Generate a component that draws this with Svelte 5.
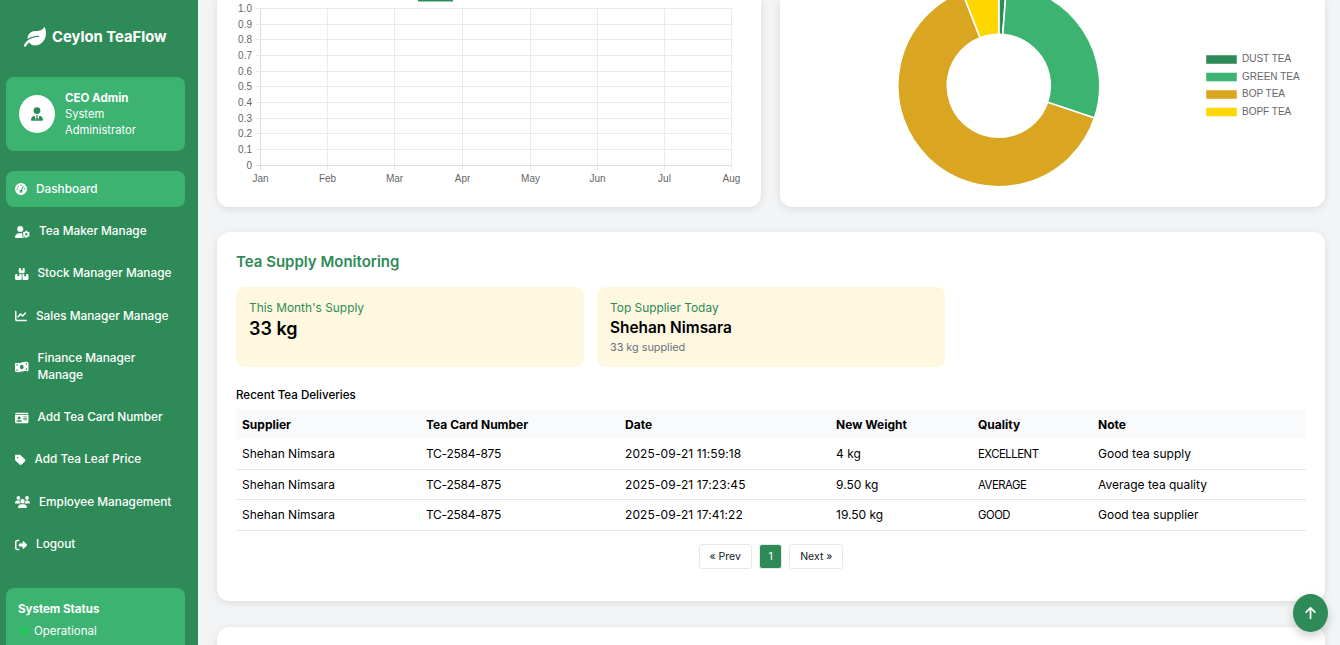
<script>
  const I = {
    gauge: [512, "M0 256a256 256 0 1 1 512 0A256 256 0 1 1 0 256zM288 96a32 32 0 1 0 -64 0 32 32 0 1 0 64 0zM256 416c35.3 0 64-28.7 64-64c0-17.4-6.9-33.1-18.1-44.6L366 161.7c5.3-12.1-.2-26.3-12.3-31.6s-26.3 .2-31.6 12.3L257.9 288c-.6 0-1.3 0-1.9 0c-35.3 0-64 28.7-64 64s28.7 64 64 64zM176 144a32 32 0 1 0 -64 0 32 32 0 1 0 64 0zM96 288a32 32 0 1 0 0-64 32 32 0 1 0 0 64zm352-32a32 32 0 1 0 -64 0 32 32 0 1 0 64 0z"],
    gear: [640, "M224 0a128 128 0 1 1 0 256A128 128 0 1 1 224 0zM178.3 304h91.4c11.8 0 23.4 1.2 34.5 3.3c-2.1 18.5 7.4 35.6 21.8 44.8c-16.6 10.6-26.7 31.6-20 53.3c4 12.9 9.4 25.5 16.4 37.6s15.2 23.1 24.4 33c15.7 16.9 39.6 18.4 57.2 8.7v.9c0 9.2 2.7 18.5 7.9 26.3H29.7C13.3 512 0 498.7 0 482.3C0 383.8 79.8 304 178.3 304zM436 218.2c0-7 4.5-13.3 11.3-14.8c10.5-2.4 21.5-3.7 32.7-3.7s22.2 1.3 32.7 3.7c6.8 1.5 11.3 7.8 11.3 14.8v30.6c7.9 3.4 15.4 7.7 22.3 12.8l24.9-14.3c6.1-3.5 13.7-2.7 18.5 2.4c7.6 8.1 14.3 17.2 20.1 27.2s10.3 20.4 13.5 31c2.1 6.7-1.1 13.7-7.2 17.2l-25 14.4c.4 4 .7 8.1 .7 12.3s-.2 8.2-.7 12.3l25 14.4c6.1 3.5 9.2 10.5 7.2 17.2c-3.3 10.6-7.8 21-13.5 31s-12.5 19.1-20.1 27.2c-4.8 5.1-12.5 5.9-18.5 2.4l-24.9-14.3c-6.9 5.1-14.3 9.4-22.3 12.8l0 30.6c0 7-4.5 13.3-11.3 14.8c-10.5 2.4-21.5 3.7-32.7 3.7s-22.2-1.3-32.7-3.7c-6.8-1.5-11.3-7.8-11.3-14.8V454.8c-8-3.4-15.6-7.7-22.5-12.9l-24.7 14.3c-6.1 3.5-13.7 2.7-18.5-2.4c-7.6-8.1-14.3-17.2-20.1-27.2s-10.3-20.4-13.5-31c-2.1-6.7 1.1-13.7 7.2-17.2l24.8-14.3c-.4-4.1-.7-8.2-.7-12.4s.3-8.3 .7-12.4L343.8 325c-6.1-3.5-9.2-10.5-7.2-17.2c3.3-10.6 7.7-21 13.5-31s12.5-19.1 20.1-27.2c4.8-5.1 12.4-5.9 18.5-2.4l24.8 14.3c6.9-5.1 14.5-9.4 22.5-12.9V218.2zm92.1 133.5a48.1 48.1 0 1 0 -96.1 0 48.1 48.1 0 1 0 96.1 0z"],
    boxes: [576, "M248 0H208c-26.5 0-48 21.5-48 48V160c0 35.3 28.7 64 64 64H352c35.3 0 64-28.7 64-64V48c0-26.5-21.5-48-48-48H328V80c0 8.8-7.2 16-16 16H264c-8.8 0-16-7.2-16-16V0zM64 256c-35.3 0-64 28.7-64 64V448c0 35.3 28.7 64 64 64H224c35.3 0 64-28.7 64-64V320c0-35.3-28.7-64-64-64H184v80c0 8.8-7.2 16-16 16H120c-8.8 0-16-7.2-16-16V256H64zM352 512H512c35.3 0 64-28.7 64-64V320c0-35.3-28.7-64-64-64H472v80c0 8.8-7.2 16-16 16H408c-8.8 0-16-7.2-16-16V256H352c-15 0-28.8 5.1-39.7 13.8c4.9 10.4 7.7 22 7.7 34.2V464c0 12.2-2.8 23.8-7.7 34.2C323.2 506.9 337 512 352 512z"],
    chart: [512, "M64 64c0-17.7-14.3-32-32-32S0 46.3 0 64V400c0 44.2 35.8 80 80 80H480c17.7 0 32-14.3 32-32s-14.3-32-32-32H80c-8.8 0-16-7.2-16-16V64zm406.6 86.6c12.5-12.5 12.5-32.8 0-45.3s-32.8-12.5-45.3 0L320 210.7l-57.4-57.4c-12.5-12.5-32.8-12.5-45.3 0l-112 112c-12.5 12.5-12.5 32.8 0 45.3s32.8 12.5 45.3 0L240 221.3l57.4 57.4c12.5 12.5 32.8 12.5 45.3 0l128-128z"],
    money: [576, "M0 112.5V422.3c0 18 10.1 35 27 41.3c87 32.5 174 10.3 261-11.9c79.8-20.3 159.6-40.7 239.3-18.9c23 6.3 48.7-9.5 48.7-33.4V89.7c0-18-10.1-35-27-41.3C462 15.9 375 38.1 288 60.3C208.2 80.6 128.4 100.9 48.7 79.1C25.6 72.8 0 88.6 0 112.5zM288 352c-44.2 0-80-43-80-96s35.8-96 80-96s80 43 80 96s-35.8 96-80 96zM64 352c35.3 0 64 28.7 64 64H64V352zm64-208c0 35.3-28.7 64-64 64V144h64zM512 304v64H448c0-35.3 28.7-64 64-64zM448 96h64v64c-35.3 0-64-28.7-64-64z"],
    card: [576, "M0 96l576 0c0-35.3-28.7-64-64-64H64C28.7 32 0 60.7 0 96zm0 32V416c0 35.3 28.7 64 64 64H512c35.3 0 64-28.7 64-64V128H0zM64 405.3c0-29.5 23.9-53.3 53.3-53.3H234.7c29.5 0 53.3 23.9 53.3 53.3c0 5.9-4.8 10.7-10.7 10.7H74.7c-5.9 0-10.7-4.8-10.7-10.7zM176 192a64 64 0 1 1 0 128 64 64 0 1 1 0-128zm176 16c0-8.8 7.2-16 16-16H496c8.8 0 16 7.2 16 16s-7.2 16-16 16H368c-8.8 0-16-7.2-16-16zm0 64c0-8.8 7.2-16 16-16H496c8.8 0 16 7.2 16 16s-7.2 16-16 16H368c-8.8 0-16-7.2-16-16zm0 64c0-8.8 7.2-16 16-16H496c8.8 0 16 7.2 16 16s-7.2 16-16 16H368c-8.8 0-16-7.2-16-16z"],
    tag: [448, "M0 80V229.5c0 17 6.7 33.3 18.7 45.3l176 176c25 25 65.5 25 90.5 0L418.7 317.3c25-25 25-65.5 0-90.5l-176-176c-12-12-28.3-18.7-45.3-18.7H48C21.5 32 0 53.5 0 80zm112 32a32 32 0 1 1 0 64 32 32 0 1 1 0-64z"],
    users: [640, "M144 0a80 80 0 1 1 0 160A80 80 0 1 1 144 0zM512 0a80 80 0 1 1 0 160A80 80 0 1 1 512 0zM0 298.7C0 239.8 47.8 192 106.7 192h42.7c15.9 0 31 3.5 44.6 9.7c-1.3 7.2-1.9 14.7-1.9 22.3c0 38.2 16.8 72.5 43.3 96c-.2 0-.4 0-.7 0H21.3C9.6 320 0 310.4 0 298.7zM405.3 320c-.2 0-.4 0-.7 0c26.6-23.5 43.3-57.8 43.3-96c0-7.6-.7-15-1.9-22.3c13.6-6.3 28.7-9.7 44.6-9.7h42.7C592.2 192 640 239.8 640 298.7c0 11.8-9.6 21.3-21.3 21.3H405.3zM224 224a96 96 0 1 1 192 0 96 96 0 1 1 -192 0zM128 485.3C128 411.7 187.7 352 261.3 352H378.7C452.3 352 512 411.7 512 485.3c0 14.7-11.9 26.7-26.7 26.7H154.7c-14.7 0-26.7-11.9-26.7-26.7z"],
    logout: [512, "M377.9 105.9L500.7 228.7c7.2 7.2 11.3 17.1 11.3 27.3s-4.1 20.1-11.3 27.3L377.9 406.1c-6.4 6.4-15 9.9-24 9.9c-18.7 0-33.9-15.2-33.9-33.9l0-62.1-128 0c-17.7 0-32-14.3-32-32l0-64c0-17.7 14.3-32 32-32l128 0 0-62.1c0-18.7 15.2-33.9 33.9-33.9c9 0 17.6 3.6 24 9.9zM160 96L96 96c-17.7 0-32 14.3-32 32l0 256c0 17.7 14.3 32 32 32l64 0c17.7 0 32 14.3 32 32s-14.3 32-32 32l-64 0c-53 0-96-43-96-96L0 128C0 75 43 32 96 32l64 0c17.7 0 32 14.3 32 32s-14.3 32-32 32z"]
  };
  const nav = [
    ["gauge", "Dashboard", true],
    ["gear", "Tea Maker Manage"],
    ["boxes", "Stock Manager Manage"],
    ["chart", "Sales Manager Manage"],
    ["money", "Finance Manager Manage"],
    ["card", "Add Tea Card Number"],
    ["tag", "Add Tea Leaf Price"],
    ["users", "Employee Management"],
    ["logout", "Logout"]
  ];
  const xs = [260.5, 327.5, 394.5, 462.5, 530.5, 597.5, 664.5, 731.5];
  const months = ["Jan", "Feb", "Mar", "Apr", "May", "Jun", "Jul", "Aug"];
  const ys = [8.5, 24.5, 39.5, 55.5, 71.5, 86.5, 102.5, 118.5, 133.5, 149.5, 165.5];
  const ticks = ["1.0", "0.9", "0.8", "0.7", "0.6", "0.5", "0.4", "0.3", "0.2", "0.1", "0"];

  const CX = 218.8, CY = 85.7, RO = 101, RI = 51.5;
  function arc(a, b) {
    const p = (r, d) => {
      const t = (d * Math.PI) / 180;
      return `${(CX + r * Math.sin(t)).toFixed(2)} ${(CY - r * Math.cos(t)).toFixed(2)}`;
    };
    const big = b - a > 180 ? 1 : 0;
    return `M${p(RO, a)}A${RO} ${RO} 0 ${big} 1 ${p(RO, b)}L${p(RI, b)}A${RI} ${RI} 0 ${big} 0 ${p(RI, a)}Z`;
  }
  const slices = [
    [0, 4.4, "#2e8b57"],
    [4.4, 108.7, "#3cb371"],
    [108.7, 338.7, "#daa520"],
    [338.7, 360, "#ffd700"]
  ];
  const legend = [
    ["DUST TEA", "#2e8b57", 55],
    ["GREEN TEA", "#3cb371", 72.5],
    ["BOP TEA", "#daa520", 90],
    ["BOPF TEA", "#ffd700", 107.5]
  ];
  const rows = [
    ["Shehan Nimsara", "TC-2584-875", "2025-09-21 11:59:18", "4 kg", "EXCELLENT", "Good tea supply"],
    ["Shehan Nimsara", "TC-2584-875", "2025-09-21 17:23:45", "9.50 kg", "AVERAGE", "Average tea quality"],
    ["Shehan Nimsara", "TC-2584-875", "2025-09-21 17:41:22", "19.50 kg", "GOOD", "Good tea supplier"]
  ];
  const heads = ["Supplier", "Tea Card Number", "Date", "New Weight", "Quality", "Note"];
  const widths = [184, 199, 211, 142, 120, 214];
</script>

<div class="app">
  <aside class="sidebar">
    <div class="brand">
      <svg class="leaf" viewBox="0 0 576 512"><path fill="currentColor" d="M546.2 9.7c-5.6-12.5-21.6-13-28.3-1.2C486.9 62.4 431.4 96 368 96h-80C182 96 96 182 96 288c0 7 .8 13.7 1.5 20.5C161.3 262.8 253.4 224 384 224c8.8 0 16 7.2 16 16s-7.2 16-16 16C132.6 256 26 410.1 2.4 468c-6.6 16.3 1.2 34.9 17.5 41.6 16.4 6.8 35-1.1 41.8-17.3 1.5-3.6 20.9-47.9 71.9-90.6 32.4 43.9 94 85.8 174.9 77.2C465.5 467.5 576 326.7 576 154.3c0-50.2-10.8-102.2-29.8-144.6z"/></svg>
      <span>Ceylon TeaFlow</span>
    </div>
    <div class="user">
      <div class="avatar">
        <svg viewBox="0 0 448 512"><path fill="currentColor" d="M96 128a128 128 0 1 0 256 0A128 128 0 1 0 96 128zm94.5 200.2l18.6 31L175.8 483.1l-36-146.9c-2-8.1-9.8-13.4-17.9-11.3C51.9 342.4 0 405.8 0 481.3c0 17 13.8 30.7 30.7 30.7H162.5c0 0 0 0 .1 0H168 280h5.5c0 0 0 0 .1 0H417.3c17 0 30.7-13.8 30.7-30.7c0-75.5-51.9-138.9-121.9-156.4c-8.1-2-15.9 3.3-17.9 11.3l-36 146.9L238.9 359.2l18.6-31c6.4-10.7-1.3-24.2-13.7-24.2H224 204.3c-12.4 0-20.1 13.6-13.7 24.2z"/></svg>
      </div>
      <div class="user-text">
        <strong>CEO Admin</strong>
        <span>System Administrator</span>
      </div>
    </div>
    <nav>
      {#each nav as [icon, label, active]}
        <div class="item" class:active>
          <svg viewBox="0 0 {I[icon][0]} 512" style="width:{(I[icon][0] / 512) * 12}px"><path fill="currentColor" d={I[icon][1]}/></svg>
          <span>{label}</span>
        </div>
      {/each}
    </nav>
    <div class="status">
      <strong>System Status</strong>
      <div class="op"><i></i><span>Operational</span></div>
    </div>
  </aside>

  <main>
    <div class="charts">
      <section class="card chart">
        <svg viewBox="217 0 544 207" width="544" height="207">
          <rect x="418" y="-6" width="35" height="7.5" fill="#2e8b57"/>
          {#each xs as x, i}
            <line x1={x} x2={x} y1="8" y2="170" stroke={i === 0 ? "#ddd" : "#ebebeb"}/>
            <text x={x} y="182" text-anchor="middle">{months[i]}</text>
          {/each}
          {#each ys as y, i}
            <line x1="256" x2="731.5" y1={y} y2={y} stroke={i === 10 ? "#ddd" : "#e9e9e9"}/>
            <text x="252" y={y + 3} text-anchor="end">{ticks[i]}</text>
          {/each}
        </svg>
      </section>
      <section class="card chart">
        <svg viewBox="780 0 545 207" width="545" height="207">
          <g transform="translate(780 0)">
            {#each slices as [a, b, c]}
              <path d={arc(a, b)} fill={c} stroke="#fff" stroke-width="1.6"/>
            {/each}
          </g>
          {#each legend as [label, c, y]}
            <rect x="1206.5" y={y + 0.5} width="30" height="8" fill={c} stroke={c} stroke-opacity="0.55"/>
            <text x="1242" y={y + 7}>{label}</text>
          {/each}
        </svg>
      </section>
    </div>

    <section class="card supply">
      <h2>Tea Supply Monitoring</h2>
      <div class="stats">
        <div class="stat">
          <div class="lbl">This Month's Supply</div>
          <div class="big">33 kg</div>
        </div>
        <div class="stat">
          <div class="lbl">Top Supplier Today</div>
          <div class="name">Shehan Nimsara</div>
          <div class="sub">33 kg supplied</div>
        </div>
      </div>
      <h3>Recent Tea Deliveries</h3>
      <table>
        <colgroup>
          {#each widths as w}<col style="width:{w}px"/>{/each}
        </colgroup>
        <thead>
          <tr>{#each heads as h}<th>{h}</th>{/each}</tr>
        </thead>
        <tbody>
          {#each rows as r}
            <tr>{#each r as c}<td>{c}</td>{/each}</tr>
          {/each}
        </tbody>
      </table>
      <div class="pager">
        <button>« Prev</button>
        <button class="on">1</button>
        <button>Next »</button>
      </div>
    </section>

    <section class="card last"></section>
  </main>

  <button class="top" aria-label="Back to top">
    <svg viewBox="0 0 384 512"><path fill="currentColor" d="M214.6 41.4c-12.5-12.5-32.8-12.5-45.3 0l-160 160c-12.5 12.5-12.5 32.8 0 45.3s32.8 12.5 45.3 0L160 141.2V448c0 17.7 14.3 32 32 32s32-14.3 32-32V141.2L329.4 246.6c12.5 12.5 32.8 12.5 45.3 0s12.5-32.8 0-45.3l-160-160z"/></svg>
  </button>
</div>

<style>
  :global(body) {
    margin: 0;
    background: #f3f4f6;
    overflow: hidden;
  }
  .app {
    display: flex;
    height: 645px;
    overflow: hidden;
    font-family: Inter, "Noto Sans", sans-serif;
    color: #000;
  }
  .sidebar {
    width: 198px;
    flex: none;
    background: #2e8b57;
    color: #fff;
    padding: 0 13px 0 6px;
    box-sizing: border-box;
    overflow: hidden;
  }
  .brand {
    height: 77px;
    display: flex;
    align-items: center;
    gap: 6px;
    padding: 0 0 4px 18px;
    box-sizing: border-box;
    font-weight: 700;
    font-size: 14.8px;
    white-space: nowrap;
  }
  .leaf {
    width: 22px;
    height: 20px;
    flex: none;
  }
  .user {
    background: #3cb371;
    border-radius: 8px;
    height: 74px;
    display: flex;
    align-items: center;
    padding-left: 13px;
    gap: 10px;
    box-sizing: border-box;
    margin-bottom: 20px;
  }
  .avatar {
    width: 36px;
    height: 38px;
    border-radius: 50%;
    background: #fff;
    color: #2e8b57;
    display: flex;
    align-items: center;
    justify-content: center;
    flex: none;
  }
  .avatar svg {
    width: 12px;
    height: 14px;
  }
  .user-text {
    font-size: 11.2px;
    line-height: 16px;
    width: 92px;
  }
  .user-text strong {
    display: block;
    font-weight: 700;
    font-size: 11.5px;
  }
  nav {
    display: flex;
    flex-direction: column;
    gap: 6px;
  }
  .item {
    display: flex;
    align-items: center;
    gap: 9px;
    padding: 9.5px 9px 10.5px;
    border-radius: 8px;
    font-size: 11.8px;
    font-weight: 500;
    line-height: 16.4px;
  }
  .item svg {
    height: 12px;
    flex: none;
    position: relative;
    top: 0.5px;
  }
  .item.active {
    background: #3cb371;
  }
  .status {
    margin-top: 24.5px;
    background: #3cb371;
    border-radius: 8px;
    padding: 13px 12px;
    height: 90px;
    box-sizing: border-box;
    font-size: 11.5px;
  }
  .status strong {
    font-weight: 700;
    display: block;
    line-height: 16px;
  }
  .op {
    display: flex;
    align-items: center;
    gap: 6px;
    margin-top: 6px;
    padding-left: 1px;
    line-height: 16px;
  }
  .op i {
    width: 9px;
    height: 9px;
    border-radius: 50%;
    background: #22c55e;
  }
  main {
    flex: 1;
    min-width: 0;
    padding: 0 15px 0 19px;
    height: 645px;
    overflow: hidden;
  }
  .charts {
    display: grid;
    grid-template-columns: 544px 545px;
    gap: 19px;
    margin-bottom: 25px;
  }
  .card {
    background: #fff;
    border-radius: 12px;
    box-shadow: 0 2px 8px rgba(0, 0, 0, 0.1);
  }
  .chart {
    height: 207px;
    border-radius: 0 0 12px 12px;
    overflow: hidden;
  }
  .chart svg {
    display: block;
    font-family: "Liberation Sans", Arial, sans-serif;
    font-size: 10px;
    fill: #666;
  }
  .supply {
    height: 369px;
    padding: 19px 19px 0;
    box-sizing: border-box;
    margin-bottom: 26px;
  }
  h2 {
    margin: 0 0 14px 0;
    font-size: 15px;
    line-height: 22px;
    font-weight: 600;
    color: #2e8b57;
  }
  .stats {
    display: grid;
    grid-template-columns: repeat(3, 348px);
    gap: 13px;
  }
  .stat {
    background: #fff8e1;
    border-radius: 8px;
    height: 80px;
    padding: 12px 13px;
    box-sizing: border-box;
  }
  .lbl {
    font-size: 11.9px;
    line-height: 17px;
    color: #2e8b57;
  }
  .big {
    font-size: 18px;
    line-height: 25px;
    font-weight: 600;
  }
  .name {
    font-size: 15.4px;
    line-height: 24px;
    font-weight: 600;
  }
  .sub {
    font-size: 10.8px;
    line-height: 16px;
    color: #6b7280;
  }
  h3 {
    margin: 20px 0 6px;
    font-size: 11.6px;
    line-height: 16px;
    font-weight: 500;
  }
  table {
    width: 1070px;
    border-collapse: collapse;
    table-layout: fixed;
    font-size: 12px;
  }
  th {
    background: #f9fafb;
    text-align: left;
    padding: 0 6px;
    height: 30px;
    font-weight: 700;
  }
  td {
    padding: 0 6px;
    height: 30.4px;
    box-sizing: border-box;
    border-bottom: 1px solid #e5e7eb;
    font-weight: 400;
  }
  td:nth-child(2) {
    letter-spacing: -0.27px;
  }
  td:nth-child(3) {
    letter-spacing: 0.1px;
  }
  td:nth-child(5) {
    font-size: 11.3px;
    letter-spacing: -0.45px;
  }
  .pager {
    display: flex;
    justify-content: center;
    gap: 7px;
    margin-top: 13px;
  }
  .pager button {
    font-family: Inter, sans-serif;
    font-size: 10.5px;
    height: 25px;
    padding: 0 10px;
    background: #fff;
    color: #111827;
    border: 1px solid #e5e7eb;
    border-radius: 3px;
  }
  .pager .on {
    background: #2e8b57;
    color: #fff;
    padding: 0 8.5px;
  }
  .last {
    height: 100px;
  }
  .top {
    position: fixed;
    left: 1293px;
    top: 594px;
    width: 35px;
    height: 38px;
    border: 0;
    padding: 0;
    border-radius: 50%;
    background: #2e8b57;
    color: #fff;
    box-shadow: 0 4px 10px rgba(0, 0, 0, 0.2);
    display: flex;
    align-items: center;
    justify-content: center;
  }
  .top svg {
    height: 14px;
    width: 11px;
  }
</style>
